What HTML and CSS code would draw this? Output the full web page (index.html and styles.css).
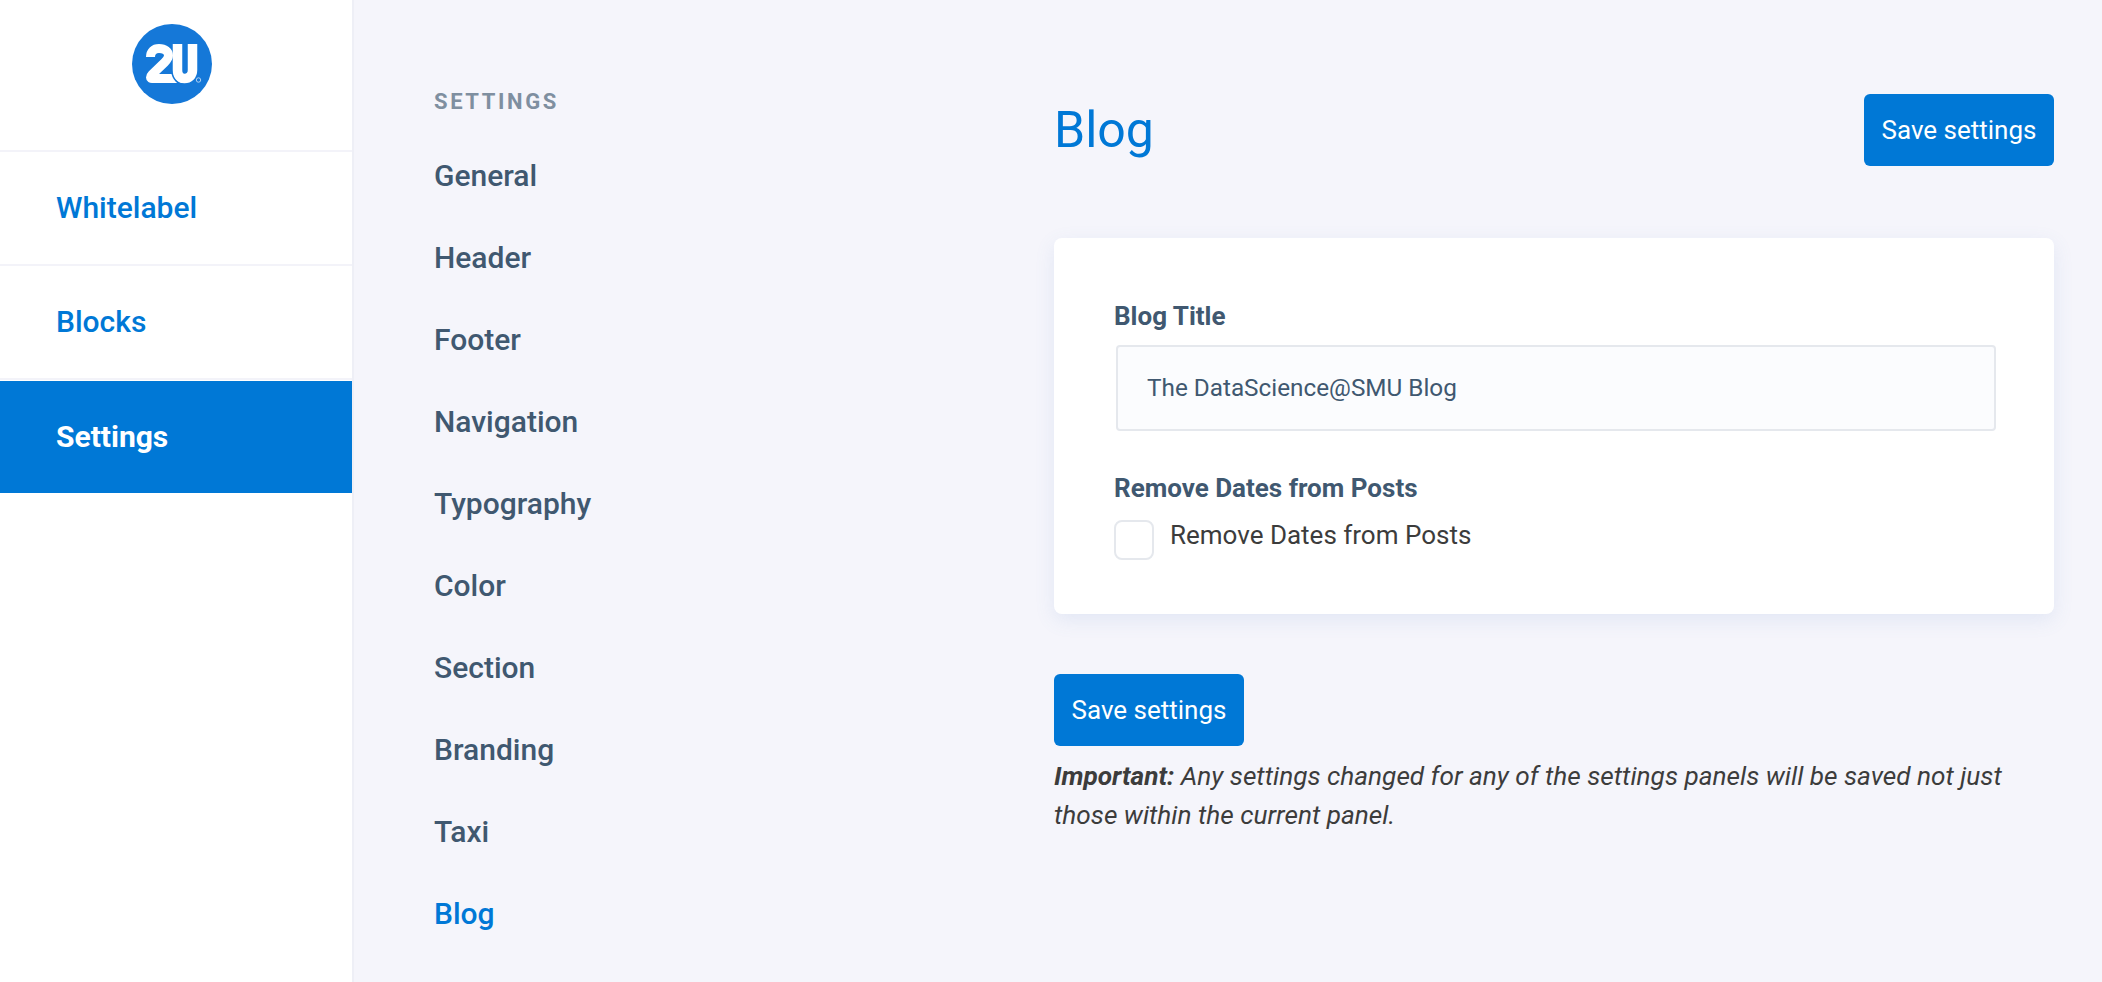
FILE: index.html
```html
<!DOCTYPE html>
<html lang="en">

<head>
  <meta charset="UTF-8">
  <meta name="viewport" content="width=device-width, initial-scale=1.0">
  <title>Blog Settings</title>
  <link rel="stylesheet" href="styles.css">
</head>

<body>
  <!-- Main sidebar -->
  <aside class="sidebar">
    <div class="logo-box">
      <svg class="logo" viewBox="0 0 80 80" role="img" aria-label="2U">
        <circle cx="40" cy="40" r="40" fill="#1578d8" />
        <path d="M18.5 33C18.5 27.500 22 24.500 27 24.500C33 24.500 36.500 27.500 36.500 31.500C36.500 34.500 35 36 32.500 38.500L20 50.500Q18.500 52 18.500 53.500Q18.500 54.500 20 54.500L50 54.500" fill="none" stroke="#fff" stroke-width="9" />
        <path d="M40 46C40.500 56 47 60.500 53 60.500" fill="none" stroke="#1578d8" stroke-width="2" />
        <path d="M45.500 20V46C45.500 51.500 48 54.500 52.500 54.500C57 54.500 60.500 51.500 60.500 46V20" fill="none" stroke="#fff" stroke-width="9.500" />
        <circle cx="66.500" cy="56" r="2.200" fill="none" stroke="#cfe2f7" stroke-width="0.800" />
      </svg>
    </div>
    <nav class="main-nav">
      <a class="main-link" href="#">Whitelabel</a>
      <a class="main-link" href="#">Blocks</a>
      <a class="main-link active" href="#">Settings</a>
    </nav>
  </aside>

  <!-- Settings sections -->
  <nav class="sub-nav">
    <h2>Settings</h2>
    <a href="#">General</a>
    <a href="#">Header</a>
    <a href="#">Footer</a>
    <a href="#">Navigation</a>
    <a href="#">Typography</a>
    <a href="#">Color</a>
    <a href="#">Section</a>
    <a href="#">Branding</a>
    <a href="#">Taxi</a>
    <a class="current" href="#">Blog</a>
  </nav>

  <main class="content">
    <div class="content-head">
      <h1>Blog</h1>
      <button class="save-button" type="button">Save settings</button>
    </div>

    <form class="card">
      <label class="field-label" for="blog_title">Blog Title</label>
      <input class="text-input" type="text" id="blog_title" value="The DataScience@SMU Blog">
      <div class="field-label second">Remove Dates from Posts</div>
      <label class="check-row">
        <span class="check-box"></span>
        <span>Remove Dates from Posts</span>
      </label>
    </form>

    <button class="save-button" type="button">Save settings</button>
    <p class="note"><strong>Important:</strong> Any settings changed for any of the settings panels will be saved not just those within the current panel.</p>
  </main>
</body>

</html>
```

FILE: styles.css
```css
* {
  box-sizing: border-box;
}

html,
body {
  height: 100%;
}

body {
  margin: 0;
  display: flex;
  height: 982px;
  overflow: hidden;
  font-family: Roboto, sans-serif;
  background-color: #f5f5fb;
  color: #405870;
}

a {
  text-decoration: none;
}

/* Main sidebar */
.sidebar {
  width: 354px;
  flex-shrink: 0;
  background-color: #fff;
  border-right: 2px solid #eeeff6;
}

.logo-box {
  height: 152px;
  padding-top: 24px;
  padding-left: 132px;
  border-bottom: 2px solid #f3f3f9;
}

.logo {
  display: block;
  width: 80px;
  height: 80px;
}

.main-link {
  display: flex;
  align-items: center;
  height: 114px;
  padding-left: 56px;
  padding-bottom: 2px;
  font-size: 30px;
  font-weight: 500;
  color: #0078d6;
  border-bottom: 2px solid #f3f3f9;
}

.main-link.active {
  height: 112px;
  margin-top: 1px;
  background-color: #0078d6;
  color: #fff;
  font-weight: 700;
  border-bottom: none;
}

/* Settings sections */
.sub-nav {
  width: 700px;
  flex-shrink: 0;
  padding: 90px 0 0 80px;
  display: flex;
  flex-direction: column;
}

.sub-nav h2 {
  margin: 0 0 37px;
  font-size: 22px;
  line-height: 24px;
  font-weight: 700;
  letter-spacing: 2.6px;
  text-transform: uppercase;
  color: #7f8fa0;
}

.sub-nav a {
  height: 82px;
  line-height: 50px;
  font-size: 30px;
  font-weight: 500;
  color: #405870;
}

.sub-nav a.current {
  color: #0078d6;
}

/* Content */
.content {
  width: 1000px;
  flex-shrink: 0;
}

.content-head {
  display: flex;
  justify-content: space-between;
  align-items: center;
  height: 72px;
  margin-top: 94px;
  margin-bottom: 72px;
}

.content-head h1 {
  margin: 0;
  font-size: 50px;
  font-weight: 400;
  color: #0078d6;
}

.save-button {
  display: block;
  width: 190px;
  height: 72px;
  padding: 0;
  border: none;
  border-radius: 6px;
  background-color: #0078d6;
  color: #fff;
  font-family: Roboto, sans-serif;
  font-size: 26px;
  font-weight: 400;
}

.card {
  height: 376px;
  margin-bottom: 60px;
  padding: 63px 60px 0;
  background-color: #fff;
  border-radius: 8px;
  box-shadow: 0 6px 20px rgba(90, 130, 200, 0.12);
}

.field-label {
  display: block;
  font-size: 26px;
  line-height: 30px;
  font-weight: 700;
  color: #405870;
}

.field-label.second {
  margin-top: 42px;
}

.text-input {
  display: block;
  width: 880px;
  height: 86px;
  margin: 14px 0 0 2px;
  padding: 0 29px 2px;
  border: 2px solid #e5e8ed;
  border-radius: 4px;
  background-color: #fbfcfe;
  font-family: Roboto, sans-serif;
  font-size: 24.300px;
  color: #405870;
}

.check-row {
  display: flex;
  align-items: flex-start;
  margin-top: 14px;
  font-size: 26px;
  line-height: 36px;
  color: #3c3c3c;
}

.check-box {
  width: 40px;
  height: 40px;
  margin-top: 3px;
  margin-right: 16px;
  border: 2px solid #e5e8ed;
  border-radius: 8px;
  background-color: #fff;
}

.note {
  margin: 11px 0 0;
  font-size: 26.200px;
  line-height: 39px;
  font-style: italic;
  color: #3c3c3c;
}
```
